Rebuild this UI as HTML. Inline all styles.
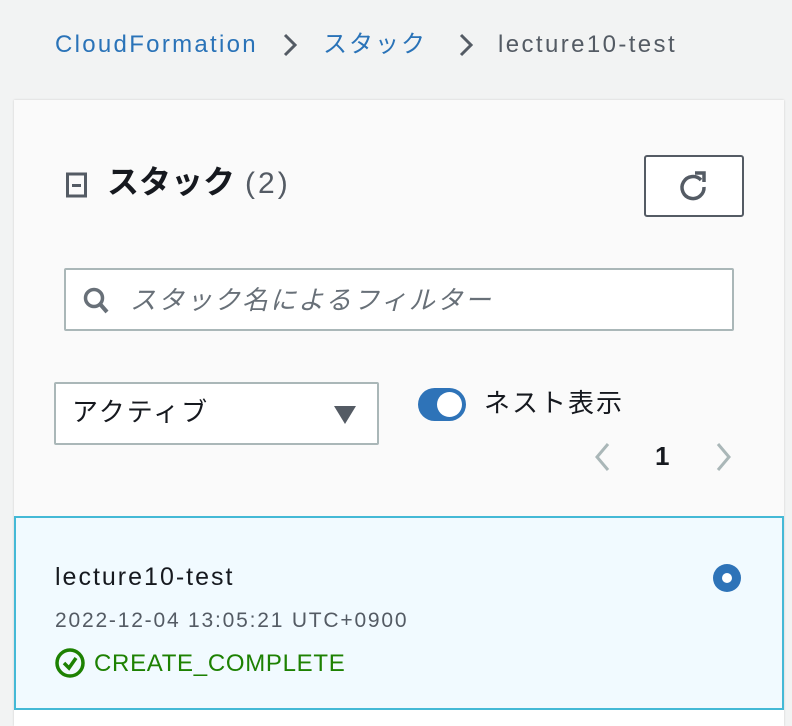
<!DOCTYPE html>
<html><head><meta charset="utf-8"><style>
body{margin:0;width:792px;height:726px;background:#f2f3f3;position:relative;overflow:hidden;font-family:"Liberation Sans","Noto Sans CJK JP",sans-serif;}
.a{position:absolute;white-space:nowrap}
</style></head><body>
<div class="a" style="left:55px;top:28px;font-size:24px;color:#2a73b8;line-height:34px;letter-spacing:2.3px">CloudFormation</div>
<svg class="a" style="left:280px;top:32px" width="20" height="26"><path d="M5 3 L15 13 L5 23" fill="none" stroke="#545b64" stroke-width="3"/></svg>
<div class="a" style="left:323px;top:28px;font-size:24px;color:#2a73b8;line-height:34px;letter-spacing:2px">スタック</div>
<svg class="a" style="left:456px;top:32px" width="20" height="26"><path d="M5 3 L15 13 L5 23" fill="none" stroke="#545b64" stroke-width="3"/></svg>
<div class="a" style="left:498px;top:28px;font-size:24px;color:#545b64;line-height:34px;letter-spacing:2.4px">lecture10-test</div>

<div class="a" style="left:14px;top:100px;width:770px;height:626px;background:#fafafa;box-shadow:0 0 2px #ccc"></div>
<div class="a" style="left:14px;top:710px;width:770px;height:16px;background:#fff"></div>

<svg class="a" style="left:66px;top:172px" width="22" height="26"><rect x="1.5" y="2" width="18" height="22" fill="none" stroke="#545b64" stroke-width="3"/><rect x="6" y="12" width="9" height="3" fill="#545b64"/></svg>
<div class="a" style="left:107px;top:160px;font-size:32px;font-weight:bold;color:#16191f;line-height:44px">スタック<span style="font-weight:normal;color:#545b64;font-size:30px;margin-left:10px;letter-spacing:3px">(2)</span></div>

<div class="a" style="left:644px;top:155px;width:100px;height:62px;border:2px solid #545b64;border-radius:3px;background:#fff;box-sizing:border-box"></div>
<svg class="a" style="left:676px;top:169px" width="34" height="34"><path d="M25 11 A11 11 0 1 0 28 18" fill="none" stroke="#545b64" stroke-width="3.5"/><path d="M19 4 L28 4 L28 13" fill="none" stroke="#545b64" stroke-width="3.5"/></svg>

<div class="a" style="left:64px;top:268px;width:670px;height:63px;border:2px solid #aab7b8;border-radius:2px;background:#fff;box-sizing:border-box"></div>
<svg class="a" style="left:82px;top:286px" width="30" height="30"><circle cx="12" cy="12" r="8.5" fill="none" stroke="#687078" stroke-width="3.5"/><path d="M18 18 L25 26" stroke="#687078" stroke-width="4"/></svg>
<div class="a" style="left:130px;top:282px;font-size:26px;font-style:italic;color:#687078;line-height:36px;letter-spacing:2px">スタック名によるフィルター</div>

<div class="a" style="left:54px;top:382px;width:325px;height:63px;border:2px solid #aab7b8;border-radius:2px;background:#fff;box-sizing:border-box"></div>
<div class="a" style="left:72px;top:394px;font-size:26px;color:#16191f;line-height:36px;letter-spacing:2px">アクティブ</div>
<svg class="a" style="left:333px;top:405px" width="24" height="20"><path d="M1 1 L23 1 L12 19Z" fill="#545b64"/></svg>

<div class="a" style="left:418px;top:388px;width:48px;height:33px;border-radius:17px;background:#2e73b8"></div>
<div class="a" style="left:437px;top:392px;width:25px;height:25px;border-radius:50%;background:#fff"></div>
<div class="a" style="left:484px;top:385px;font-size:26px;color:#16191f;line-height:36px;letter-spacing:2px">ネスト表示</div>

<svg class="a" style="left:592px;top:441px" width="20" height="32"><path d="M16 3 L5 16 L16 29" fill="none" stroke="#aab7b8" stroke-width="3"/></svg>
<div class="a" style="left:655px;top:440px;font-size:26px;font-weight:bold;color:#16191f;line-height:32px">1</div>
<svg class="a" style="left:714px;top:441px" width="20" height="32"><path d="M4 3 L15 16 L4 29" fill="none" stroke="#aab7b8" stroke-width="3"/></svg>

<div class="a" style="left:14px;top:516px;width:770px;height:194px;border:2px solid #44b9d6;background:#f1faff;box-sizing:border-box"></div>
<div class="a" style="left:55px;top:560px;font-size:25px;color:#16191f;line-height:34px;letter-spacing:2px">lecture10-test</div>
<div class="a" style="left:55px;top:606px;font-size:21px;color:#545b64;line-height:30px;letter-spacing:1.8px">2022-12-04 13:05:21 UTC+0900</div>
<svg class="a" style="left:55px;top:647px" width="32" height="32"><circle cx="15" cy="16" r="13" fill="none" stroke="#1d8102" stroke-width="3.5"/><path d="M9 16 L14 21 L21 11" fill="none" stroke="#1d8102" stroke-width="3.5"/></svg>
<div class="a" style="left:94px;top:647px;font-size:24px;color:#1d8102;line-height:34px;letter-spacing:0.7px">CREATE_COMPLETE</div>
<div class="a" style="left:713px;top:564px;width:28px;height:28px;border-radius:50%;background:#2e73b8"></div>
<div class="a" style="left:722px;top:573px;width:10px;height:10px;border-radius:50%;background:#fff"></div>
</body></html>
